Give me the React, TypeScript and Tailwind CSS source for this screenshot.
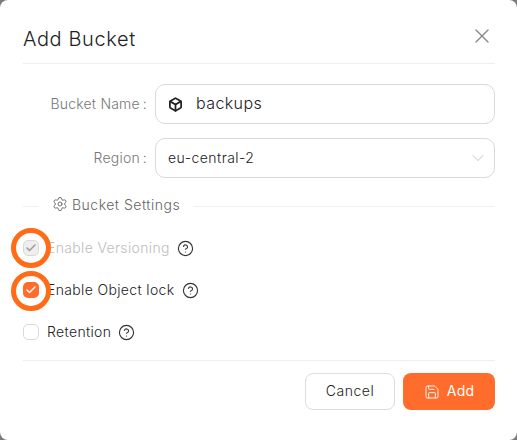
import { Box, ChevronDown, CircleHelp, Settings, Save, X, Check } from 'lucide-react';

const font = { fontFamily: '"Inter", "Open Sans", sans-serif' };

function CheckRow({ label, state }: { label: string; state: 'disabled' | 'checked' | 'off' }) {
  return (
    <div className="flex items-center h-[18px]">
      <span
        className={
          state === 'checked'
            ? 'w-4 h-4 rounded-[5px] bg-[#ff6c2c] flex items-center justify-center'
            : state === 'disabled'
              ? 'w-4 h-4 rounded-[5px] bg-[#eeeeee] border border-[#d9d9d9] flex items-center justify-center'
              : 'w-4 h-4 rounded-[5px] bg-white border border-[#d9d9d9]'
        }
      >
        {state === 'checked' && <Check className="w-3 h-3 text-white" strokeWidth={3} />}
        {state === 'disabled' && <Check className="w-3 h-3 text-[#9a9a9a]" strokeWidth={3} />}
      </span>
      <span
        className={
          state === 'disabled'
            ? 'ml-2 pb-[2px] text-[14px] font-light tracking-[0.35px] text-[#bdbdbd]'
            : 'ml-2 pb-[2px] text-[14px] font-light tracking-[0.35px] text-[#222222]'
        }
      >
        {label}
      </span>
      <CircleHelp className="ml-[7px] w-[17px] h-[17px] text-[#333333]" strokeWidth={1.6} />
    </div>
  );
}

export default function App() {
  return (
    <div className="w-[517px] h-[440px] bg-[#7a7a7a] overflow-hidden" style={font}>
      <div className="relative w-full h-full bg-white rounded-lg pl-[23px] pr-[22px] flex flex-col">
        {/* header */}
        <div className="h-[64px] pt-[24px] border-b border-[#eeeeee] flex justify-between items-start shrink-0">
          <h2 className="mt-px text-[20px] leading-[28px] tracking-[0.6px] font-light text-[#222222]">Add Bucket</h2>
          <X className="w-[24px] h-[24px] mr-px text-[#8a8a8a]" strokeWidth={1.4} />
        </div>

        {/* form */}
        <div className="mt-[20px] flex items-center">
          <label className="w-[132px] pr-2 pb-[2px] text-right text-[14px] font-light tracking-[0.2px] text-[#777777]">
            Bucket Name<span className="ml-[3px]">:</span>
          </label>
          <div className="flex-1 h-[40px] border border-[#d9d9d9] rounded-[10px] flex items-center px-[12px]">
            <Box className="w-[15px] h-[15px] text-[#222222]" strokeWidth={2.8} />
            <span className="ml-[13px] pb-[2px] text-[16px] font-light tracking-[0.4px] text-[#222222]">backups</span>
          </div>
        </div>
        <div className="mt-[14px] flex items-center">
          <label className="w-[132px] pr-2 pb-[2px] text-right text-[14px] font-light tracking-[0.2px] text-[#777777]">
            Region<span className="ml-[3px]">:</span>
          </label>
          <div className="flex-1 h-[40px] border border-[#d9d9d9] rounded-[10px] flex items-center justify-between pl-[12px] pr-[6px]">
            <span className="pb-[2px] text-[14px] font-light tracking-[0.45px] text-[#222222]">eu-central-2</span>
            <ChevronDown className="w-[20px] h-[20px] text-[#bdbdbd]" strokeWidth={1.1} />
          </div>
        </div>

        {/* section divider */}
        <div className="mt-[18px] flex items-center h-[20px]">
          <div className="w-[16px] h-px bg-[#f0f0f0]" />
          <div className="px-[13px] pb-[4px] flex items-center text-[14px] font-light tracking-[0.5px] text-[#666666]">
            <Settings className="w-[16px] h-[16px] mr-[4px]" strokeWidth={1.4} />
            Bucket Settings
          </div>
          <div className="flex-1 h-px bg-[#f0f0f0]" />
        </div>

        <div className="mt-[23px] flex flex-col gap-[24px]">
          <CheckRow label="Enable Versioning" state="disabled" />
          <CheckRow label="Enable Object lock" state="checked" />
          <CheckRow label="Retention" state="off" />
        </div>

        {/* footer */}
        <div className="mt-[19px] pt-[12px] border-t border-[#eeeeee] flex justify-end gap-2">
          <button className="w-[90px] h-[37px] rounded-lg bg-white border border-[#dcdce6] pb-[2px] text-[14px] font-light tracking-[0.5px] text-[#222222]">
            Cancel
          </button>
          <button className="w-[92px] h-[37px] rounded-lg bg-[#ff6c2c] text-white text-[14px] tracking-[0.2px] flex items-center justify-center">
            <Save className="w-[16px] h-[16px] mr-[7px]" strokeWidth={1.4} />
            <span className="pb-[2px]">Add</span>
          </button>
        </div>

        {/* annotation circles */}
        <div className="absolute left-[11px] top-[228px] w-[40px] h-[40px] rounded-full border-[5px] border-[#ff6c17]" />
        <div className="absolute left-[11px] top-[271px] w-[40px] h-[40px] rounded-full border-[5px] border-[#ff6c17]" />
      </div>
    </div>
  );
}
